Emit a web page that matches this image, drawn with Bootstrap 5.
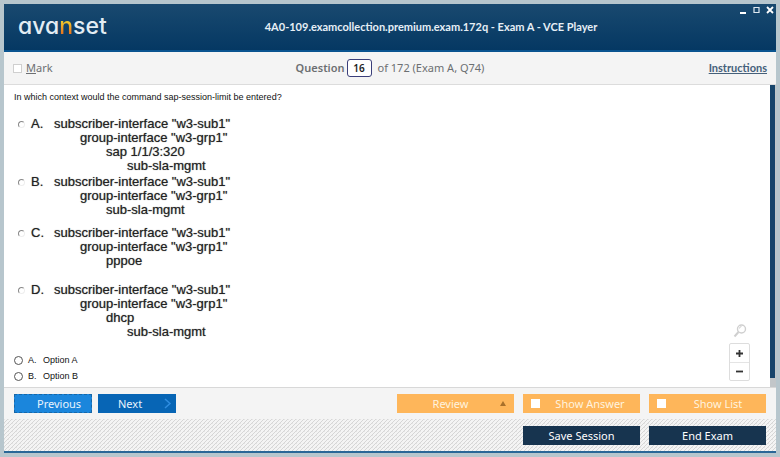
<!DOCTYPE html>
<html lang="en">
<head>
<meta charset="utf-8">
<meta name="viewport" content="width=device-width, initial-scale=1">
<title>VCE Player</title>
<link href="https://cdn.jsdelivr.net/npm/bootstrap@5.3.0/dist/css/bootstrap.min.css" rel="stylesheet">
<style>
body{background:#b7c6cd;font-family:"Noto Sans","Open Sans",sans-serif;font-size:11px;line-height:16px}
.window-frame{min-height:100vh;padding:4px}
.title-bar{background:linear-gradient(#19496f,#053863);border-bottom:2px solid #0a5490;height:48px;color:#e6eff6}
.brand{font-family:Inter,sans-serif;font-feature-settings:"cv11";font-size:23px;line-height:24px;font-weight:500;color:#e3edf4;padding:0 0 2px 14px}
.brand span{background:linear-gradient(#f2d22c 30%,#e8761f 75%);background-clip:text;-webkit-background-clip:text;color:transparent}
.exam-title{font-family:Lato,sans-serif;font-weight:700;padding-left:72px}
.window-tools{gap:6px;padding:2px 2px 0}
.window-tools button,.zoom-tools button{background:none;border:0;padding:0;line-height:0}
.tool-bar{background:#f4f4f4;border-bottom:1px solid #dcdcdc;height:33px;padding:0 9px 0 9px;color:#6c6f72}
.side{flex:1 1 0}
input[type=checkbox],input[type=radio]{appearance:none;margin:0;flex:none;background:#fff}
.mark-box{width:9px;height:9px;border:1px solid #cfcfcf}
.question-set{gap:2px}
.question-no{width:25px;height:18px;border:1px solid #3b3f7a;border-radius:3px;text-align:center;font-size:10px;font-weight:600;color:#222;padding:0;background:#fff}
.instructions{font-family:Lato,sans-serif;font-weight:700;color:#45607a}
.content-area{background:#fff;font-family:"Liberation Sans",Arial,sans-serif;font-size:9px;color:#111}
.question-pane{padding:4px 10px 1px}
.prompt{margin:0 0 12px}
.choice{font-size:13px;line-height:14px;color:#222;text-shadow:0 0 1px #777;padding-left:4px}
.choice .choice-dot{width:7px;height:7px;border-radius:50%;border:1px solid;border-color:#888 #eee #eee #888;margin-top:4px}
.choice-letter{width:23px;margin-left:6px}
.in-1{padding-left:26px}.in-2{padding-left:52px}.in-3{padding-left:73px}
.gap-s{margin-bottom:2px}.gap-m{margin-bottom:9px}.gap-l{margin-bottom:15px}
.answers{margin-top:13px}
.answer-dot{width:9px;height:9px;border-radius:50%;border:1px solid #555}
.answer-letter{width:15px;margin-left:5px}
.zoom-tools{padding:0 20px 6px 0;gap:5px}
.zoom-box{border:1px solid #ddd;border-radius:2px;width:21px}
.zoom-box button{height:18px}
.zoom-box button+button{border-top:1px solid #e4e4e4}
.scroll-track{width:6px;background:#c2c6c9;padding:0 1px 9px 0}
.scroll-thumb{background:#16446b}
.action-bar{background:#f4f4f4;border-top:1px solid #d8d8d8;padding:6px 10px}
.act{border:0;border-radius:0;padding:0;height:19px;font-size:11px;line-height:19px;color:#fff}
.nav-set{gap:6px}
.nav-act{width:78px;background:#0765b5;color:#eaf4fc}
.prev-act{background:#1b86dc;outline:1px dashed #1767a8;outline-offset:-1px}
.orange{background:#feb65a;color:#fff3df;width:117px}
.navy{background:#17344f;width:117px}
.tick{width:9px;height:9px}
.right-set{gap:9px}
.foot-bar{background:linear-gradient(135deg,#d6d6d6 12%,#f4f4f4 13% 44%,#d6d6d6 45% 56%,#f4f4f4 57% 88%,#d6d6d6 89%) 0 0/4px 4px;border-bottom:2px solid #2a6797;padding:7px 10px 6px}
</style>
<script src="https://cdn.jsdelivr.net/npm/bootstrap@5.3.0/dist/js/bootstrap.bundle.min.js"></script>
</head>
<body>
<div class="window-frame d-flex flex-column">
  <header class="title-bar d-flex">
    <div class="side brand align-self-center">ava<span>n</span>set</div>
    <div class="exam-title align-self-center">4A0-109.examcollection.premium.exam.172q - Exam A - VCE Player</div>
    <div class="side window-tools d-flex justify-content-end align-items-start">
      <button type="button" aria-label="Minimize"><svg width="8" height="8"><path d="M1 7h6" stroke="#fff" stroke-width="2"/></svg></button>
      <button type="button" aria-label="Maximize"><svg width="7" height="8"><path d="M1 1.5h5v5H1z" fill="none" stroke="#dfe9f1" stroke-width="1.2"/></svg></button>
      <button type="button" aria-label="Close"><svg width="8" height="8"><path d="M1 1l6 6M7 1L1 7" stroke="#fff" stroke-width="1.8"/></svg></button>
    </div>
  </header>
  <div class="tool-bar d-flex align-items-center">
    <label class="side d-flex align-items-center gap-1"><input type="checkbox" class="mark-box"><span><u>M</u>ark</span></label>
    <div class="question-set d-flex align-items-center"><label for="qno" class="fw-semibold">Question</label><input id="qno" class="question-no" value="16"><span class="ps-1">of 172 (Exam A, Q74)</span></div>
    <div class="side text-end"><a href="#" class="instructions">Instructions</a></div>
  </div>
  <main class="content-area d-flex flex-grow-1">
    <div class="question-pane flex-grow-1">
      <p class="prompt">In which context would the command sap-session-limit be entered?</p>
      <label class="choice gap-s d-flex"><input type="radio" name="context" class="choice-dot"><span class="choice-letter">A.</span>
        <span class="d-flex flex-column"><span>subscriber-interface "w3-sub1"</span><span class="in-1">group-interface "w3-grp1"</span><span class="in-2">sap 1/1/3:320</span><span class="in-3">sub-sla-mgmt</span></span></label>
      <label class="choice gap-m d-flex"><input type="radio" name="context" class="choice-dot"><span class="choice-letter">B.</span>
        <span class="d-flex flex-column"><span>subscriber-interface "w3-sub1"</span><span class="in-1">group-interface "w3-grp1"</span><span class="in-2">sub-sla-mgmt</span></span></label>
      <label class="choice gap-l d-flex"><input type="radio" name="context" class="choice-dot"><span class="choice-letter">C.</span>
        <span class="d-flex flex-column"><span>subscriber-interface "w3-sub1"</span><span class="in-1">group-interface "w3-grp1"</span><span class="in-2">pppoe</span></span></label>
      <label class="choice d-flex"><input type="radio" name="context" class="choice-dot"><span class="choice-letter">D.</span>
        <span class="d-flex flex-column"><span>subscriber-interface "w3-sub1"</span><span class="in-1">group-interface "w3-grp1"</span><span class="in-2">dhcp</span><span class="in-3">sub-sla-mgmt</span></span></label>
      <div class="answers">
        <label class="d-flex align-items-center"><input type="radio" name="answer" class="answer-dot"><span class="answer-letter">A.</span><span>Option A</span></label>
        <label class="d-flex align-items-center"><input type="radio" name="answer" class="answer-dot"><span class="answer-letter">B.</span><span>Option B</span></label>
      </div>
    </div>
    <div class="zoom-tools d-flex flex-column justify-content-end align-items-center">
      <svg width="14" height="14" fill="none" stroke="#cfcfcf"><circle cx="8.5" cy="5" r="4" stroke-width="1.4"/><path d="M5.500 8L1.500 12.500" stroke-width="2"/><path d="M6.500 4.500a2 2 0 0 1 2-2"/></svg>
      <div class="zoom-box d-flex flex-column">
        <button type="button" aria-label="Zoom in"><svg width="9" height="9"><path d="M1 4.500h7M4.500 1v7" stroke="#333" stroke-width="1.8"/></svg></button>
        <button type="button" aria-label="Zoom out"><svg width="9" height="9"><path d="M1 4.500h7" stroke="#333" stroke-width="1.800"/></svg></button>
      </div>
    </div>
    <div class="scroll-track d-flex"><div class="scroll-thumb flex-grow-1"></div></div>
  </main>
  <div class="action-bar d-flex nav-set">
    <button type="button" class="act nav-act prev-act text-end pe-2">Previous&nbsp;</button>
    <button type="button" class="act nav-act d-flex align-items-center justify-content-between"><span class="ps-3 ms-1">Next</span><svg class="me-1" width="9" height="11"><path d="M2 1l5 4.500-5 4.500" fill="none" stroke="#2f8de0" stroke-width="1.500"/></svg></button>
    <div class="right-set d-flex ms-auto">
      <button type="button" class="act orange d-flex align-items-center"><span class="flex-grow-1 ps-1">Review</span><svg class="me-2" width="6" height="5"><path d="M3 0l3 5H0z" fill="#a8702a"/></svg></button>
      <label class="act orange d-flex align-items-center"><input type="checkbox" class="tick ms-2"><span class="flex-grow-1 text-center">Show Answer</span></label>
      <label class="act orange d-flex align-items-center"><input type="checkbox" class="tick ms-2"><span class="flex-grow-1 text-center ps-1">Show List</span></label>
    </div>
  </div>
  <footer class="foot-bar right-set d-flex justify-content-end">
    <button type="button" class="act navy">Save Session</button>
    <button type="button" class="act navy">End Exam</button>
  </footer>
</div>
</body>
</html>
